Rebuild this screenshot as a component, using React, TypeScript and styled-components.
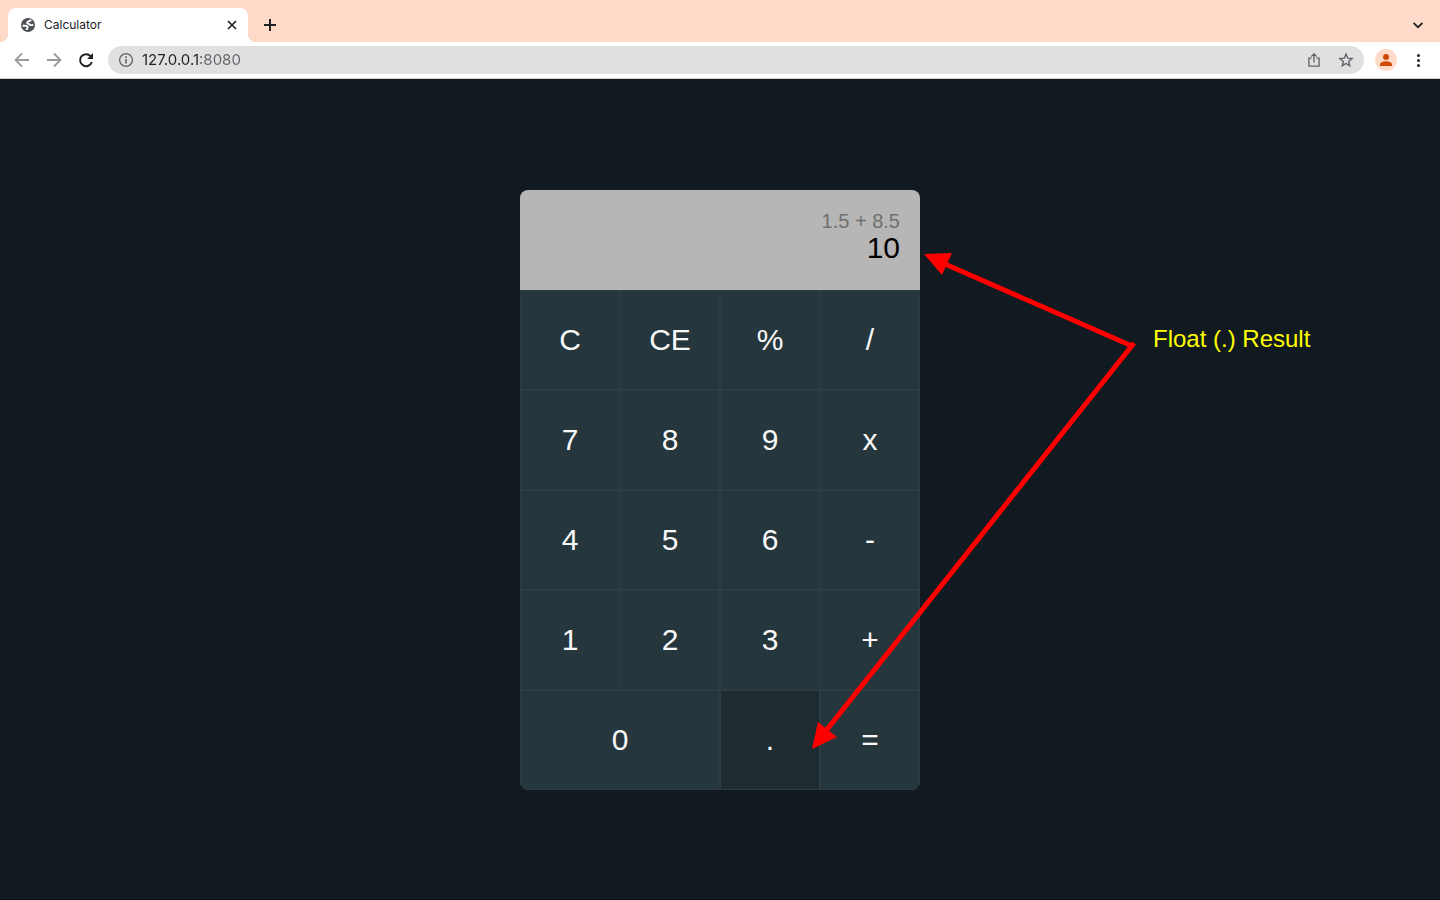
import React from "react";
import styled, { createGlobalStyle } from "styled-components";

const GlobalStyle = createGlobalStyle`
  *, *::before, *::after { box-sizing: border-box; }
  body { margin: 0; background: #121a21; }
  button, input { font: inherit; color: inherit; }
`;

const Window = styled.div`
  display: flex;
  flex-direction: column;
  min-height: 100vh;
  background: #121a21;
`;

const BrowserChrome = styled.header`
  font-family: Inter, Roboto, sans-serif;
  color: #202124;
  background: #ffffff;
  border-bottom: 1px solid #d0d0d0;
`;

const TabStrip = styled.div`
  display: flex;
  align-items: flex-end;
  height: 42px;
  padding: 0 12px 0 8px;
  background: #ffdac8;
`;

const Tab = styled.div`
  position: relative;
  display: flex;
  align-items: center;
  gap: 8px;
  width: 240px;
  height: 34px;
  padding: 0 8px 0 12px;
  font-size: 12px;
  line-height: 16px;
  background: #ffffff;
  border-radius: 8px 8px 0 0;

  &::before,
  &::after {
    content: "";
    position: absolute;
    bottom: 0;
    width: 8px;
    height: 8px;
  }
  &::before {
    right: 100%;
    background: radial-gradient(circle at 0 0, #ffdac8 8px, #ffffff 8px);
  }
  &::after {
    left: 100%;
    background: radial-gradient(circle at 100% 0, #ffdac8 8px, #ffffff 8px);
  }
`;

const TabTitle = styled.span`
  flex: 1;
`;

const IconButton = styled.button<{ $size?: number; $color?: string }>`
  display: flex;
  align-items: center;
  justify-content: center;
  flex: none;
  width: ${(p) => p.$size ?? 32}px;
  height: ${(p) => p.$size ?? 32}px;
  padding: 0;
  border: 0;
  background: none;
  color: ${(p) => p.$color ?? "#202124"};
`;

const StripActions = styled.div`
  display: flex;
  flex: 1;
  align-items: center;
  justify-content: space-between;
  height: 34px;
  padding-left: 6px;
`;

const Toolbar = styled.div`
  display: flex;
  align-items: center;
  height: 36px;
  padding: 0 6px;
`;

const AddressBar = styled.div`
  display: flex;
  flex: 1;
  align-items: center;
  height: 28px;
  margin: 0 6px;
  padding: 0 2px 0 10px;
  border-radius: 14px;
  background: #e0e0e0;
  color: #5f6368;
`;

const AddressInput = styled.input`
  flex: 1;
  min-width: 0;
  height: 20px;
  margin-left: 8px;
  padding: 0;
  border: 0;
  outline: 0;
  font-size: 15px;
  line-height: 20px;
  color: #202124;
  background: linear-gradient(90deg, #202124 58px, #5f6368 58px);
  background-clip: text;
  -webkit-background-clip: text;
  -webkit-text-fill-color: transparent;
`;

const Avatar = styled.button`
  display: flex;
  align-items: center;
  justify-content: center;
  width: 22px;
  height: 22px;
  margin: 0 5px;
  padding: 0;
  border: 0;
  border-radius: 50%;
  background: #ffdac8;
  color: #d14900;
`;

const Page = styled.main`
  display: flex;
  flex: 1;
  align-items: center;
  justify-content: center;
  padding: 22px 0 20px;
  border-bottom: 1px solid #0b0f14;
  font-family: "Liberation Sans", Arial, sans-serif;
`;

const Stage = styled.div`
  position: relative;
`;

const Calculator = styled.section`
  width: 400px;
  overflow: hidden;
  border-radius: 8px;
`;

const Display = styled.div`
  display: flex;
  flex-direction: column;
  height: 100px;
  padding: 20px;
  background: #b6b6b6;
  text-align: right;
`;

const Expression = styled.span`
  font-size: 20px;
  line-height: 23px;
  color: #707070;
`;

const Result = styled.output`
  font-size: 30px;
  line-height: 30px;
  color: #000000;
`;

const Keypad = styled.div`
  display: grid;
  grid-template-columns: repeat(4, 1fr);
  grid-auto-rows: 100px;
`;

const Key = styled.button<{ $wide?: boolean; $pressed?: boolean }>`
  grid-column: span ${(p) => (p.$wide ? 2 : 1)};
  padding: 0;
  border: 1px solid #2d3b42;
  background: ${(p) => (p.$pressed ? "#1e2b30" : "#25373d")};
  color: #f8f8f8;
  font-size: 30px;
  line-height: 34px;
`;

const Arrows = styled.svg`
  position: absolute;
  top: 0;
  left: 0;
  pointer-events: none;
`;

const Note = styled.p`
  position: absolute;
  top: 135px;
  left: 633px;
  margin: 0;
  font-size: 24px;
  line-height: 28px;
  white-space: nowrap;
  color: #ffff00;
`;

const keys = [
  "C", "CE", "%", "/",
  "7", "8", "9", "x",
  "4", "5", "6", "-",
  "1", "2", "3", "+",
  "0", ".", "=",
];

const GlobeIcon = () => (
  <svg width="16" height="16" viewBox="0 0 16 16" aria-hidden="true">
    <circle cx="8" cy="8" r="7" fill="#4d5157" />
    <path
      d="M11.2 3C9.6 4.4 7.4 3.9 7.2 5.5c-.1 1.6 2 1.1 2.7 2.3.5.6 1.6.5 3.4.1M2.6 8.5c2.1.5 4.6-.2 5.1 1.2.4 1.5-1 1.6-1.2 3.3"
      fill="none"
      stroke="#ffffff"
      strokeWidth="1.9"
      strokeLinejoin="round"
    />
  </svg>
);

const Stroke = ({ d, size = 16, width = 2 }: { d: string; size?: number; width?: number }) => (
  <svg width={size} height={size} viewBox={`0 0 ${size} ${size}`} fill="none" stroke="currentColor" strokeWidth={width} aria-hidden="true">
    <path d={d} />
  </svg>
);

export default function App() {
  return (
    <Window>
      <GlobalStyle />
      <BrowserChrome>
        <TabStrip>
          <Tab>
            <GlobeIcon />
            <TabTitle>Calculator</TabTitle>
            <IconButton $size={16} aria-label="Close tab">
              <Stroke d="M4 4l8 8M12 4l-8 8" width={1.7} />
            </IconButton>
          </Tab>
          <StripActions>
            <IconButton aria-label="New tab">
              <Stroke d="M8 2v12M2 8h12" />
            </IconButton>
            <IconButton $size={20} aria-label="Search tabs">
              <Stroke d="M3.5 5.8L8 10.2l4.5-4.4" width={1.7} />
            </IconButton>
          </StripActions>
        </TabStrip>
        <Toolbar>
          <IconButton $color="#9b9b9b" aria-label="Back">
            <Stroke d="M15 8H2M8 1.5L1.5 8 8 14.5" width={1.8} />
          </IconButton>
          <IconButton $color="#9b9b9b" aria-label="Forward">
            <Stroke d="M1 8h13M8 1.5L14.5 8 8 14.5" width={1.8} />
          </IconButton>
          <IconButton aria-label="Reload">
            <svg width="16" height="16" viewBox="0 0 16 16" aria-hidden="true">
              <path d="M12.6 4.2A6 6 0 1 0 13.8 10" fill="none" stroke="currentColor" strokeWidth="2" />
              <path d="M15 1v6H9z" fill="currentColor" />
            </svg>
          </IconButton>
          <AddressBar>
            <svg width="16" height="16" viewBox="0 0 16 16" fill="none" stroke="currentColor" aria-hidden="true">
              <circle cx="8" cy="8" r="6.4" strokeWidth="1.3" />
              <path d="M8 7v4.5M8 4.3v1.7" strokeWidth="1.6" />
            </svg>
            <AddressInput type="text" aria-label="Address" defaultValue="127.0.0.1:8080" />
            <IconButton $color="#5f6368" aria-label="Share">
              <Stroke d="M5.5 6.2h-2.6v7.9h10.2V6.2h-2.6M8 10.5V2M5.2 4.6L8 1.8l2.8 2.8" width={1.3} />
            </IconButton>
            <IconButton $color="#5f6368" aria-label="Bookmark">
              <Stroke d="M8 2.1l1.7 4.1 4.4.4-3.4 2.9 1 4.3L8 11.5l-3.7 2.3 1-4.3-3.4-2.9 4.4-.4z" width={1.4} />
            </IconButton>
          </AddressBar>
          <Avatar aria-label="Profile">
            <svg width="14" height="14" viewBox="0 0 14 14" fill="currentColor" aria-hidden="true">
              <circle cx="7" cy="4" r="3" />
              <path d="M1 13v-1.6C1 9.2 4.6 8.2 7 8.2s6 1 6 3.2V13z" />
            </svg>
          </Avatar>
          <IconButton aria-label="Menu">
            <svg width="16" height="16" viewBox="0 0 16 16" fill="currentColor" aria-hidden="true">
              <circle cx="8.5" cy="3.4" r="1.5" />
              <circle cx="8.5" cy="8.4" r="1.5" />
              <circle cx="8.5" cy="13.4" r="1.5" />
            </svg>
          </IconButton>
        </Toolbar>
      </BrowserChrome>
      <Page>
        <Stage>
          <Calculator aria-label="Calculator">
            <Display>
              <Expression>1.5 + 8.5</Expression>
              <Result>10</Result>
            </Display>
            <Keypad>
              {keys.map((k) => (
                <Key key={k} $wide={k === "0"} $pressed={k === "."}>
                  {k}
                </Key>
              ))}
            </Keypad>
          </Calculator>
          <Arrows width="620" height="600" viewBox="0 0 620 600" fill="#ff0000" stroke="#ff0000" aria-hidden="true">
            <path d="M612 156L425 74M614 153L305 542" fill="none" strokeWidth="5" />
            <path d="M404 64l28-1-10 22zM292 559l6-27 19 15z" stroke="none" />
          </Arrows>
          <Note>Float (.) Result</Note>
        </Stage>
      </Page>
    </Window>
  );
}
